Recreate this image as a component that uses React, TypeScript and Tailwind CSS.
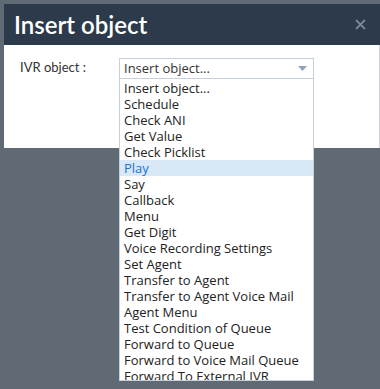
import React from "react";

const items = [
  "Insert object...",
  "Schedule",
  "Check ANI",
  "Get Value",
  "Check Picklist",
  "Play",
  "Say",
  "Callback",
  "Menu",
  "Get Digit",
  "Voice Recording Settings",
  "Set Agent",
  "Transfer to Agent",
  "Transfer to Agent Voice Mail",
  "Agent Menu",
  "Test Condition of Queue",
  "Forward to Queue",
  "Forward to Voice Mail Queue",
  "Forward To External IVR",
];

export default function App() {
  return (
    <div className="relative w-[380px] h-[389px] overflow-hidden bg-[#5f6a75] pt-[4px] pl-[4px]">
      <div className="w-[376px] flex flex-col">
        <div className="h-[41px] bg-[#2c3a4b] flex items-center justify-between pl-[10px] pr-[14px]">
          <span className="text-white text-[24px] font-semibold leading-none font-['Lato',sans-serif]">
            Insert object
          </span>
          <svg width="11" height="11" viewBox="0 0 11 11">
            <path d="M1 1 L10 10 M10 1 L1 10" stroke="#7a8696" strokeWidth="1.8" />
          </svg>
        </div>
        <div className="h-[103px] bg-white border-r border-[#d0d5da] pt-[13px] pl-[16px] flex items-start">
          <span className="w-[99px] text-[13px] text-[#333] font-['Lato',sans-serif] leading-[18px]">
            IVR object :
          </span>
          <div className="w-[195px] h-[21px] border border-[#c5d0dc] flex items-center justify-between pl-[4px] pr-[6px]">
            <span className="text-[13px] text-[#333] font-['Open_Sans',sans-serif]">Insert object...</span>
            <svg width="9" height="5" viewBox="0 0 9 5">
              <path d="M0 0 L9 0 L4.5 5 Z" fill="#8fa3ba" />
            </svg>
          </div>
        </div>
      </div>
      <div className="absolute left-[119px] top-[79px] w-[195px] h-[302px] bg-white border border-[#c5d0dc] border-t-0 overflow-hidden">
        <div className="pt-[1px]">
          {items.map((it) => (
            <div
              key={it}
              className={
                it === "Play"
                  ? "h-[16px] leading-[16px] pl-[4px] text-[13px] bg-[#d8e8f6] text-[#1a73d0] font-['Open_Sans',sans-serif]"
                  : "h-[16px] leading-[16px] pl-[4px] text-[13px] text-[#222] font-['Open_Sans',sans-serif]"
              }
            >
              {it}
            </div>
          ))}
        </div>
      </div>
    </div>
  );
}
